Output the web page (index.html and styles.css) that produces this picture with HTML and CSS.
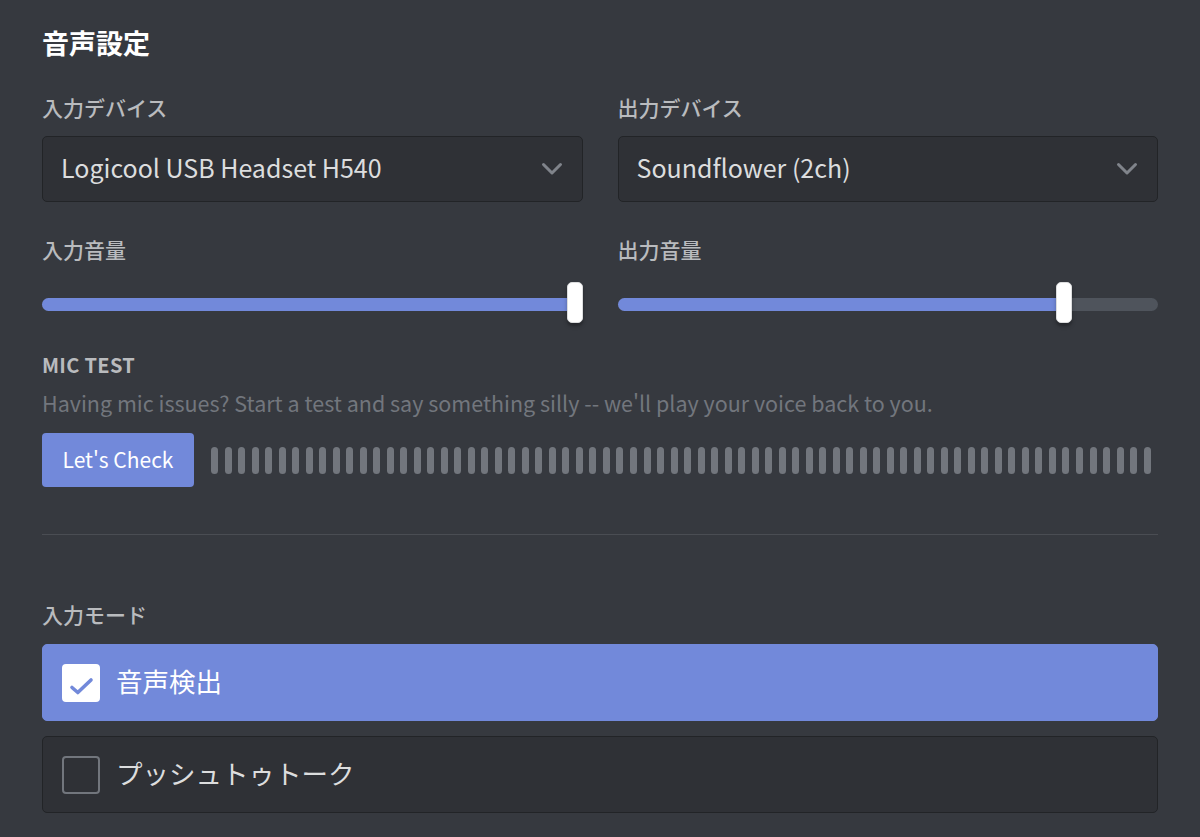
FILE: index.html
```html
<!DOCTYPE html>
<html lang="ja">
<head>
<meta charset="utf-8">
<title>音声設定</title>
<link rel="stylesheet" href="styles.css">
</head>
<body>
<main class="page">
  <h2 class="title">音声設定</h2>
  <div class="devices">
    <div class="col">
      <h5 class="label">入力デバイス</h5>
      <div class="select">
        <span class="select-value">Logicool USB Headset H540</span>
        <svg class="chev" width="22" height="14" viewBox="0 0 22 14"><path d="M2.5 2.5 L11 11 L19.5 2.5" fill="none" stroke="#80848b" stroke-width="3" stroke-linecap="round" stroke-linejoin="round"/></svg>
      </div>
      <h5 class="label label-vol">入力音量</h5>
      <div class="slider">
        <div class="track"><div class="fill" style="width:100%"></div></div>
        <div class="thumb" style="left:calc(100% - 16px)"></div>
      </div>
    </div>
    <div class="col">
      <h5 class="label">出力デバイス</h5>
      <div class="select">
        <span class="select-value">Soundflower (2ch)</span>
        <svg class="chev" width="22" height="14" viewBox="0 0 22 14"><path d="M2.5 2.5 L11 11 L19.5 2.5" fill="none" stroke="#80848b" stroke-width="3" stroke-linecap="round" stroke-linejoin="round"/></svg>
      </div>
      <h5 class="label label-vol">出力音量</h5>
      <div class="slider">
        <div class="track"><div class="fill" style="width:446px"></div></div>
        <div class="thumb" style="left:438px"></div>
      </div>
    </div>
  </div>

  <section class="mic">
    <h5 class="eyebrow">Mic Test</h5>
    <p class="desc">Having mic issues? Start a test and say something silly -- we'll play your voice back to you.</p>
    <div class="mic-row">
      <button class="btn">Let's Check</button>
      <div class="meter">
        <span class="bar"></span><span class="bar"></span><span class="bar"></span><span class="bar"></span><span class="bar"></span><span class="bar"></span><span class="bar"></span><span class="bar"></span><span class="bar"></span><span class="bar"></span>
        <span class="bar"></span><span class="bar"></span><span class="bar"></span><span class="bar"></span><span class="bar"></span><span class="bar"></span><span class="bar"></span><span class="bar"></span><span class="bar"></span><span class="bar"></span>
        <span class="bar"></span><span class="bar"></span><span class="bar"></span><span class="bar"></span><span class="bar"></span><span class="bar"></span><span class="bar"></span><span class="bar"></span><span class="bar"></span><span class="bar"></span>
        <span class="bar"></span><span class="bar"></span><span class="bar"></span><span class="bar"></span><span class="bar"></span><span class="bar"></span><span class="bar"></span><span class="bar"></span><span class="bar"></span><span class="bar"></span>
        <span class="bar"></span><span class="bar"></span><span class="bar"></span><span class="bar"></span><span class="bar"></span><span class="bar"></span><span class="bar"></span><span class="bar"></span><span class="bar"></span><span class="bar"></span>
        <span class="bar"></span><span class="bar"></span><span class="bar"></span><span class="bar"></span><span class="bar"></span><span class="bar"></span><span class="bar"></span><span class="bar"></span><span class="bar"></span><span class="bar"></span>
        <span class="bar"></span><span class="bar"></span><span class="bar"></span><span class="bar"></span><span class="bar"></span><span class="bar"></span><span class="bar"></span><span class="bar"></span><span class="bar"></span><span class="bar"></span>
      </div>
    </div>
  </section>

  <hr class="divider">

  <h5 class="label mode-label">入力モード</h5>
  <div class="radio-group">
    <div class="radio selected">
      <span class="checkbox">
        <svg width="34" height="34" viewBox="0 0 34 34"><path d="M8 21.5 L13.8 26.5 L27 14" fill="none" stroke="#7289da" stroke-width="3.6" stroke-linecap="round" stroke-linejoin="round"/></svg>
      </span>
      <span class="radio-text">音声検出</span>
    </div>
    <div class="radio">
      <span class="checkbox"></span>
      <span class="radio-text">プッシュトゥトーク</span>
    </div>
  </div>
</main>
</body>
</html>
```

FILE: styles.css
```css
html, body {
  margin: 0;
  background: #36393f;
}

body {
  font-family: "Noto Sans CJK JP", "Noto Sans", sans-serif;
}

.page {
  padding: 27px 42px 0;
}

.title {
  margin: 0;
  font-size: 27px;
  line-height: 32px;
  font-weight: 700;
  color: #ffffff;
}

.devices {
  display: grid;
  grid-template-columns: 1fr 1fr;
  column-gap: 35px;
  margin-top: 36px;
}

.label {
  margin: 0;
  font-size: 21px;
  line-height: 24px;
  font-weight: 500;
  color: #b9bbbe;
}

.select {
  margin-top: 17px;
  height: 66px;
  box-sizing: border-box;
  border: 1px solid #222427;
  background: #2f3136;
  border-radius: 5px;
  display: flex;
  align-items: center;
  justify-content: space-between;
  padding: 0 19px 0 18px;
}

.select-value {
  font-size: 25px;
  line-height: 32px;
  color: #dcddde;
  padding-bottom: 4px;
}

.chev {
  display: block;
}

.label-vol {
  margin-top: 35px;
}

.slider {
  position: relative;
  height: 41px;
  margin-top: 21px;
}

.track {
  position: relative;
  top: 16px;
  height: 13px;
  border-radius: 7px;
  background: #4f545c;
}

.fill {
  height: 100%;
  border-radius: 7px;
  background: #7289da;
}

.thumb {
  position: absolute;
  top: 0;
  width: 16px;
  height: 41px;
  box-sizing: border-box;
  background: #ffffff;
  border: 1px solid #dcddde;
  border-radius: 5px;
  box-shadow: 0 3px 1px rgba(0, 0, 0, 0.08), 0 3px 4px rgba(0, 0, 0, 0.25);
}

.mic {
  margin-top: 30px;
}

.eyebrow {
  margin: 0;
  font-size: 20px;
  line-height: 24px;
  font-weight: 700;
  letter-spacing: 0.3px;
  text-transform: uppercase;
  color: #b9bbbe;
}

.desc {
  margin: 12px 0 0;
  font-size: 21.5px;
  line-height: 28px;
  color: #72767d;
}

.mic-row {
  display: flex;
  align-items: center;
  margin-top: 16px;
}

.btn {
  flex: none;
  width: 152px;
  height: 54px;
  border: 0;
  border-radius: 4px;
  background: #7289da;
  color: #ffffff;
  font-family: "Noto Sans CJK JP", "Noto Sans", sans-serif;
  font-size: 21px;
  line-height: 28px;
  font-weight: 400;
  padding: 0 0 3px;
}

.meter {
  flex: 1;
  display: flex;
  justify-content: space-between;
  margin: 0 7px 0 17px;
}

.bar {
  width: 7px;
  height: 27px;
  border-radius: 4px;
  background: #72767d;
}

.divider {
  margin: 47px 0 0;
  border: 0;
  height: 1px;
  background: #4a4d53;
}

.mode-label {
  margin-top: 67px;
}

.radio-group {
  margin-top: 18px;
  display: flex;
  flex-direction: column;
  gap: 15px;
}

.radio {
  height: 77px;
  box-sizing: border-box;
  border-radius: 5px;
  display: flex;
  align-items: center;
  gap: 16px;
  padding-left: 19px;
  background: #2f3136;
  border: 1px solid #222427;
}

.radio.selected {
  background: #7289da;
  border-color: #7289da;
}

.checkbox {
  flex: none;
  width: 38px;
  height: 38px;
  box-sizing: border-box;
  border-radius: 4px;
  border: 2px solid #72767d;
  display: flex;
  align-items: center;
  justify-content: center;
}

.radio.selected .checkbox {
  background: #ffffff;
  border-color: #ffffff;
}

.checkbox svg {
  display: block;
}

.radio-text {
  font-size: 26.5px;
  line-height: 32px;
  color: #dcddde;
  padding-bottom: 4px;
}

.radio.selected .radio-text {
  color: #ffffff;
}
```
